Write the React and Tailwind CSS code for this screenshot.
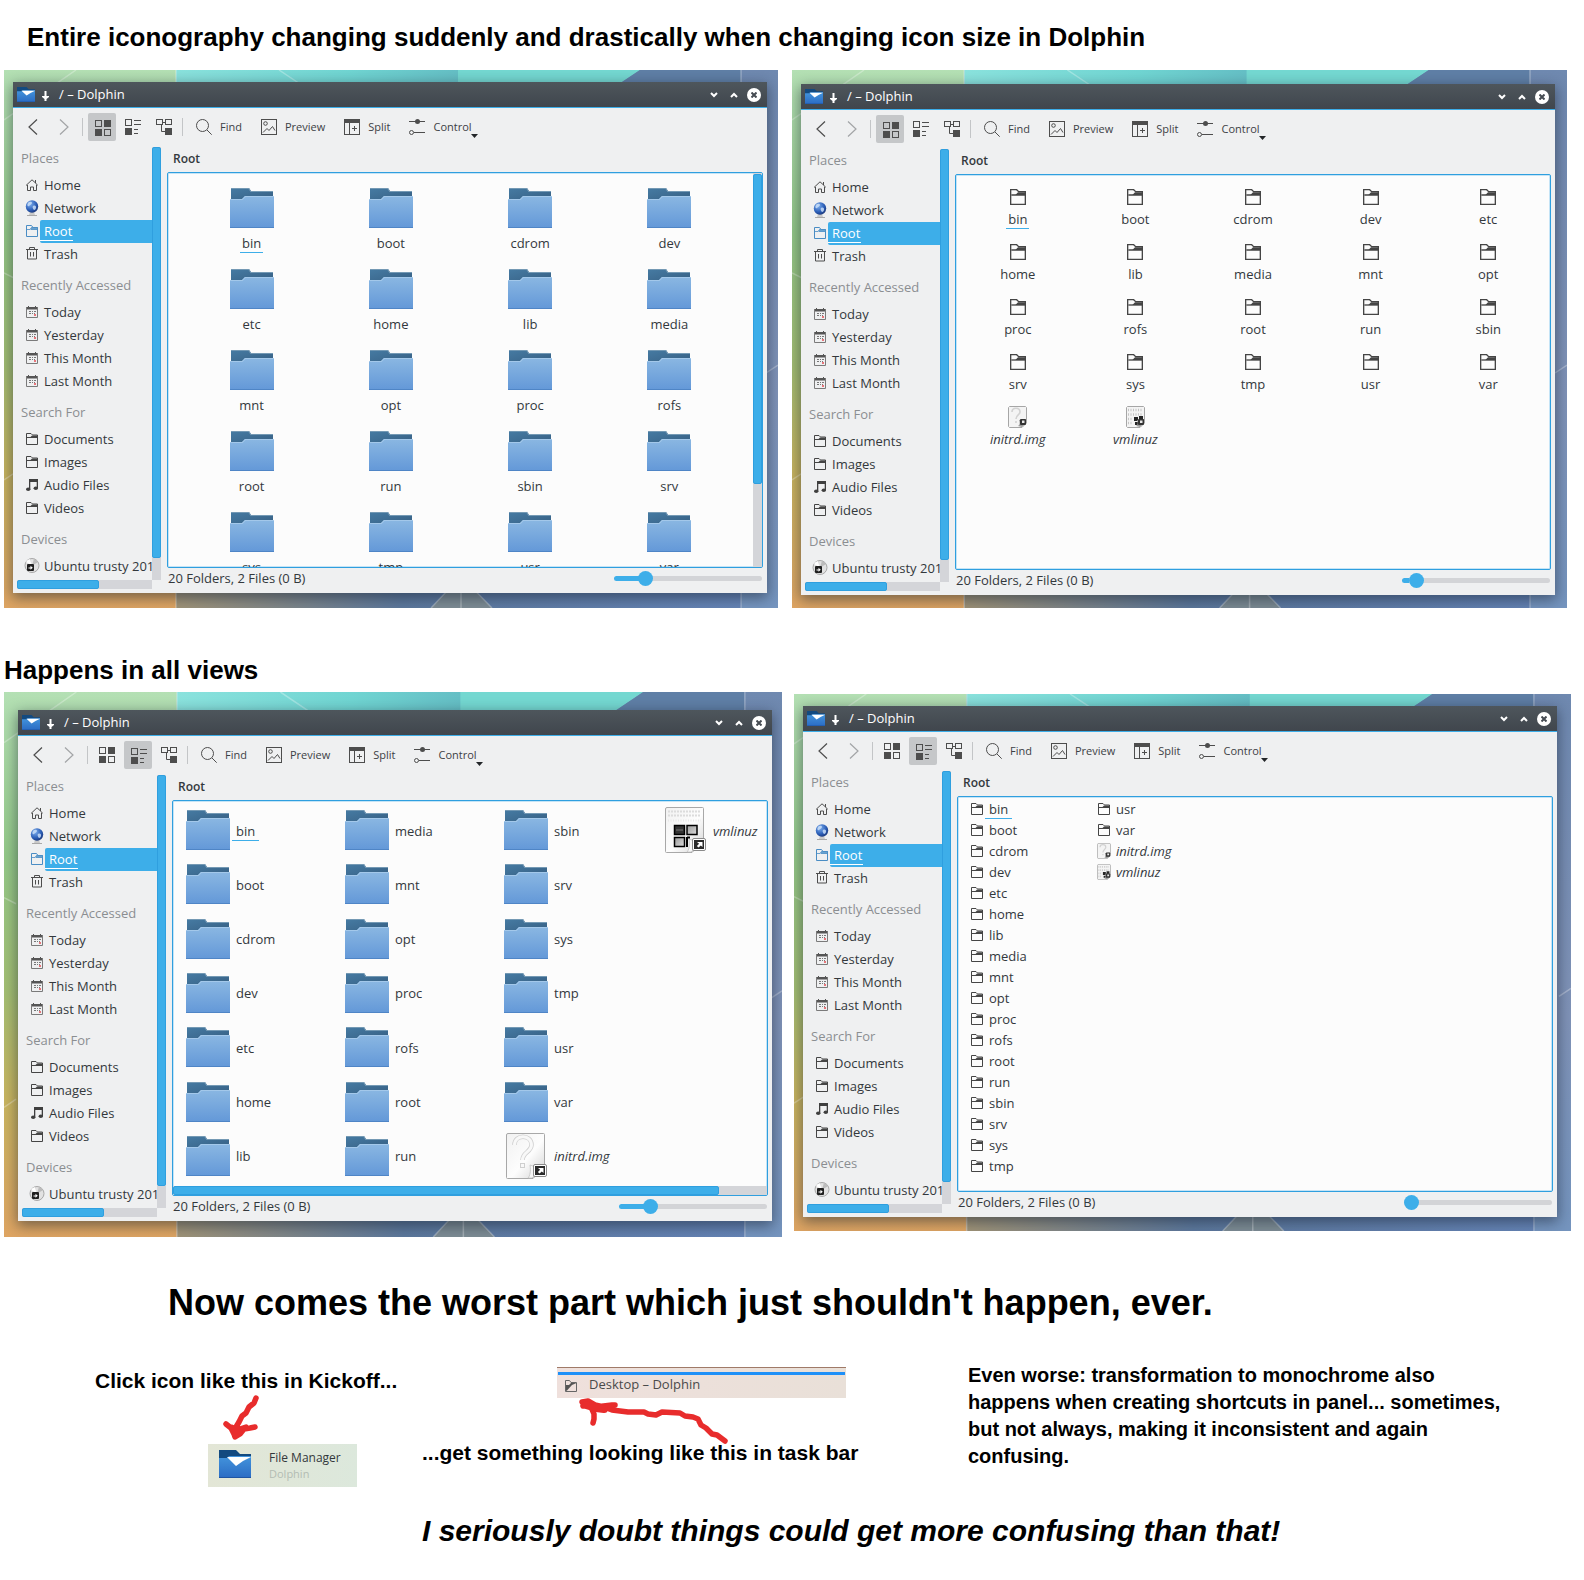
import React, { useState } from "react";

const UI = "font-['Open_Sans','Noto_Sans',sans-serif]";

/* ---------- icons ---------- */

function AppIcon({ className }) {
  return (
    <svg viewBox="0 0 32 28" preserveAspectRatio="none" className={className} aria-hidden="true">
      <defs>
        <linearGradient id="appBody" x1="0" y1="0" x2="0" y2="1">
          <stop offset="0" stopColor="#4394dc" />
          <stop offset="1" stopColor="#2b6cc4" />
        </linearGradient>
      </defs>
      <path d="M0 0h17l4 4h11v6H0z" fill="#134a80" />
      <path d="M0 8h8l2-2h22v22H0z" fill="url(#appBody)" />
      <path d="M0 27h32v1H0z" fill="#1f55a3" />
      <path d="M8 7h24l-8 4-7 5z" fill="#fff" />
    </svg>
  );
}

function BigFolder() {
  return (
    <svg width="44" height="40" viewBox="0 0 44 40" className="shrink-0" aria-hidden="true">
      <defs>
        <linearGradient id="folderFront" x1="0" y1="0" x2="0" y2="1">
          <stop offset="0" stopColor="#8ab7e2" />
          <stop offset="1" stopColor="#6398d8" />
        </linearGradient>
        <linearGradient id="folderBack" x1="0" y1="0" x2="1" y2="1">
          <stop offset="0" stopColor="#467ba3" />
          <stop offset="1" stopColor="#376084" />
        </linearGradient>
      </defs>
      <path d="M1 0h18l2 3h22v9H1z" fill="url(#folderBack)" />
      <path d="M1 0h18l2 3h22v1H20.500l-2-3H1z" fill="#7499b4" />
      <path d="M0 11h12l3-3h29v32H0z" fill="url(#folderFront)" />
      <path d="M0 11h12l3-3h29v1H15.500l-3 3H0z" fill="#a3c8ea" />
      <path d="M0 39h44v1H0z" fill="#4f85c6" />
    </svg>
  );
}

function MonoFolder({ size = 12, color = "#454545" }) {
  return (
    <svg width={size} height={size} viewBox="0 0 12 12" className="shrink-0" fill="none" aria-hidden="true">
      <path d="M.5 11.500V.5H5l1.500 1.500h5v9.500z" stroke={color} />
      <path d="M1 4.500h3L6 2.500h5.500v2z" fill={color} />
      <path d="M1 4.500h10.500" stroke={color} />
    </svg>
  );
}

function OutlineFolder() {
  return (
    <svg width="12" height="12" viewBox="0 0 12 12" fill="none" className="shrink-0" aria-hidden="true">
      <path d="M.5 11.500V.5h5L7 2.500h4.500v9z" stroke="#4a8dc4" />
      <path d="M1 4.500h3l1.500-2h6v2H5" fill="#6aa3d0" stroke="#4a8dc4" strokeWidth=".8" />
    </svg>
  );
}

function HomeIcon() {
  return (
    <svg width="12" height="12" viewBox="0 0 12 12" fill="none" stroke="#4d4d4d" className="shrink-0" aria-hidden="true">
      <path d="M0 6.500L6 .8l3 2.700M9.500 1v3l2.300 2.500M1.500 6v5.500h3V8h3v3.500h3V6" />
    </svg>
  );
}

function GlobeIcon() {
  return (
    <svg width="14" height="16" viewBox="0 0 14 16" className="-ml-px shrink-0" aria-hidden="true">
      <defs>
        <radialGradient id="globe" cx=".35" cy=".3" r=".8">
          <stop offset="0" stopColor="#7fb0ee" />
          <stop offset=".6" stopColor="#2c5fb8" />
          <stop offset="1" stopColor="#17306f" />
        </radialGradient>
      </defs>
      <path d="M2 15.500h10" stroke="#a9a9a9" />
      <path d="M5 12h4l1 3H4z" fill="#c9c9c9" />
      <circle cx="7" cy="6.500" r="6.200" fill="url(#globe)" />
      <path d="M3 3c2-2 4-1 4 0S5 5 4 6 1.500 5 3 3zM8 6c2-1 3.500 0 3 2s-2 2.500-2.500 1.500S7 7 8 6z" fill="#c9def8" opacity=".85" />
    </svg>
  );
}

function TrashIcon() {
  return (
    <svg width="12" height="13" viewBox="0 0 12 13" fill="none" stroke="#4d4d4d" className="shrink-0" aria-hidden="true">
      <path d="M0 2.500h12M3.500 2V.5h5V2M1.500 2.500v9.500h9V2.500M4.500 5v4.500M7.500 5v4.500" />
    </svg>
  );
}

function CalendarIcon() {
  return (
    <svg width="12" height="12" viewBox="0 0 12 12" fill="none" className="shrink-0" aria-hidden="true">
      <path d="M.5 1v10.500h11V1" stroke="#7a7a7a" />
      <path d="M1 1h10v2.500H1z" fill="#555" />
      <path d="M2.500 0v2M9.500 0v2" stroke="#555" />
      <path d="M3 5.500h2M6 5.500h1M8 5.500h2M3 7.500h2M6 7.500h1M8 7.500h1" stroke="#777" />
      <path d="M8 8h2v2H8z" fill="#e8757a" />
    </svg>
  );
}

function MusicIcon() {
  return (
    <svg width="12" height="12" viewBox="0 0 12 12" className="shrink-0" fill="#3f3f3f" aria-hidden="true">
      <path d="M3 0h9v3H3z" />
      <path d="M3 0h1.300v10H3zM10.700 0H12v9h-1.300z" />
      <ellipse cx="2.200" cy="10.200" rx="2.200" ry="1.700" />
      <ellipse cx="9.800" cy="9.200" rx="2.200" ry="1.700" />
    </svg>
  );
}

function DiscIcon() {
  return (
    <svg width="16" height="16" viewBox="0 0 16 16" className="-ml-0.5 shrink-0" aria-hidden="true">
      <circle cx="8" cy="7.500" r="7" fill="#e2e2e2" stroke="#a8a8a8" />
      <path d="M8 7.500L10 .8a7 7 0 014 3.500z" fill="#bcbcbc" />
      <path d="M8 7.500L2 4A7 7 0 015.500 1z" fill="#fff" />
      <rect x="3" y="6" width="7" height="7" rx="1" fill="#1f1f1f" />
      <path d="M4.500 9.500h2V7.800l2.300 2-2.300 2V10.500h-2z" fill="#fff" />
    </svg>
  );
}

function FileIcon({ kind, width, height }) {
  return (
    <svg width={width} height={height} viewBox="0 0 41 46" className="shrink-0" aria-hidden="true">
      <defs>
        <linearGradient id="paper" x1="0" y1="0" x2="1" y2="1">
          <stop offset="0" stopColor="#f1f1f1" />
          <stop offset=".55" stopColor="#fdfdfd" />
          <stop offset="1" stopColor="#d2d2d2" />
        </linearGradient>
        <linearGradient id="tile" x1="0" y1="0" x2="1" y2="1">
          <stop offset="0" stopColor="#9b9b9b" />
          <stop offset="1" stopColor="#dcdcdc" />
        </linearGradient>
      </defs>
      <path d="M2 .5h35.500a1 1 0 011 1V34L27 45.500H1.500a1 1 0 01-1-1V2A1.500 1.500 0 012 .5z" fill="url(#paper)" stroke="#a8a8a8" />
      <path d="M22 45c2-2 3-7 2-13 4 2 9 2 14 1L26 45z" fill="#f7f7f7" stroke="#bdbdbd" strokeWidth=".7" />
      {kind === "unknown" ? (
        <g fill="none" stroke="#cfcfcf">
          <path d="M8.500 12c0-11 17-11 17 0 0 7-9 7-9 15" strokeWidth="4.500" />
          <path d="M8.500 12c0-11 17-11 17 0 0 7-9 7-9 15" stroke="#f8f8f8" strokeWidth="3" />
          <rect x="14.500" y="30.500" width="4" height="4" fill="#f8f8f8" />
        </g>
      ) : (
        <g>
          <path d="M3 4.500h33M3 8.500h33" stroke="#dcdcdc" strokeWidth="2" strokeDasharray="2 1" />
          <path d="M3 13.500h33" stroke="#e8e8e8" strokeWidth="2" strokeDasharray="1 1.500" />
          <rect x="9.500" y="18.500" width="10" height="9" fill="#333" stroke="#000" strokeWidth="1.500" />
          <path d="M11 23h7" stroke="#777" />
          <rect x="22" y="18.500" width="10" height="9" fill="url(#tile)" stroke="#000" strokeWidth="1.500" />
          <rect x="9.500" y="30.500" width="10" height="9" fill="url(#tile)" stroke="#000" strokeWidth="1.500" />
          <path d="M22 30v10M22 30.500h3" stroke="#000" strokeWidth="2" />
        </g>
      )}
      <rect x="27.500" y="31.500" width="13" height="12" rx="1.500" fill="#fff" stroke="#8a8a8a" />
      <rect x="29" y="33" width="10" height="9" fill="#2a2a2a" />
      <path d="M32 35h5.500v5l-1.700-1.600-2.300 2.200-1.600-1.500 2.200-2.300z" fill="#fff" />
    </svg>
  );
}

function SmallFileIcon({ kind, width, height }) {
  return (
    <svg width={width} height={height} viewBox="0 0 19 22" className="shrink-0" aria-hidden="true">
      <path d="M1.500 .5h16l1 1V17l-4.500 4.500H1.500l-1-1v-19z" fill="#f4f4f4" stroke="#a6a6a6" />
      {kind === "unknown" ? (
        <path d="M4 6c0-5 8-5 8 0 0 3-4 3-4 7M8 15v2" fill="none" stroke="#d2d2d2" strokeWidth="1.600" />
      ) : (
        <g>
          <path d="M2 4h15M2 8.500h15M2 13h5M2 17h5" stroke="#c4c4c4" strokeWidth="2.500" strokeDasharray="1 1.500" />
          <path d="M8 11h4v4H8zM13 10h4v4h-4zM9 16h3v3H9z" fill="#262626" />
        </g>
      )}
      <path d="M10 20c2-1 2-4 1-6l7-1v4l-4 4z" fill="#9a9a9a" />
      <rect x="12" y="13" width="6" height="6" rx="1" fill="#333" />
      <path d="M14 14.500h2.500V17h-2.500z" fill="#e8e8e8" />
    </svg>
  );
}

const T = "#4d4d4d";

const GridGlyph = () => (
  <svg width="16" height="16" viewBox="0 0 16 16" fill="none" stroke={T} aria-hidden="true">
    <rect x=".5" y=".5" width="6" height="6" />
    <rect x="9" y="0" width="7" height="7" fill={T} stroke="none" />
    <rect x="0" y="9" width="7" height="7" fill={T} stroke="none" />
    <rect x="9.500" y="9.500" width="6" height="6" />
  </svg>
);
const CompactGlyph = () => (
  <svg width="16" height="16" viewBox="0 0 16 16" fill="none" stroke={T} aria-hidden="true">
    <rect x=".5" y=".5" width="6" height="6" />
    <rect x="0" y="9" width="7" height="7" fill={T} stroke="none" />
    <path d="M9 1.500h7M9 5.500h7M9 10.500h4M9 14.500h4" />
  </svg>
);
const TreeGlyph = () => (
  <svg width="16" height="16" viewBox="0 0 16 16" fill="none" stroke={T} aria-hidden="true">
    <rect x=".5" y=".5" width="6" height="5" />
    <rect x="9.500" y=".5" width="6" height="5" />
    <rect x="9" y="9" width="7" height="7" fill={T} stroke="none" />
    <path d="M7 3.500h2M5.500 6v6.500H9" />
  </svg>
);
const FindGlyph = () => (
  <svg width="16" height="16" viewBox="0 0 16 16" fill="none" stroke={T} aria-hidden="true">
    <circle cx="6.500" cy="6.500" r="6" />
    <path d="M11 11l4.700 4.700" />
  </svg>
);
const PreviewGlyph = () => (
  <svg width="16" height="16" viewBox="0 0 16 16" fill="none" stroke={T} aria-hidden="true">
    <rect x=".5" y=".5" width="15" height="15" />
    <circle cx="4.500" cy="4.500" r="1.800" />
    <path d="M2 13.500l4-4 2 2 3.500-4 2.500 4" />
  </svg>
);
const SplitGlyph = () => (
  <svg width="16" height="16" viewBox="0 0 16 16" fill="none" stroke={T} aria-hidden="true">
    <rect x=".5" y=".5" width="15" height="15" />
    <rect x="0" y="0" width="16" height="4" fill={T} stroke="none" />
    <path d="M5.500 4v12M10.500 7v5M8 9.500h5" />
  </svg>
);
const ControlGlyph = () => (
  <svg width="16" height="16" viewBox="0 0 16 16" fill="none" stroke={T} aria-hidden="true">
    <path d="M0 2.500h16M5 13.500h11" />
    <circle cx="8.500" cy="2.500" r="2.500" fill={T} stroke="none" />
    <circle cx="2.500" cy="13.500" r="2" />
  </svg>
);
const Chevron = ({ flip }) => (
  <svg width="16" height="16" viewBox="0 0 16 16" fill="none" stroke={flip ? "#a2a4a6" : T} aria-hidden="true">
    <path d={flip ? "M4 .5L12 8l-8 7.500" : "M12 .5L4 8l8 7.500"} strokeWidth="1.200" />
  </svg>
);

/* ---------- desktop wallpaper ---------- */

function Wallpaper({ id }) {
  return (
    <svg viewBox="0 0 774 538" preserveAspectRatio="none" className="absolute inset-0 h-full w-full" aria-hidden="true">
      <defs>
        <linearGradient id={id + "l"} x1="0" y1="0" x2="0" y2="1">
          <stop offset="0" stopColor="#b4e0b4" />
          <stop offset=".3" stopColor="#93c888" />
          <stop offset=".55" stopColor="#a3be72" />
          <stop offset=".75" stopColor="#c8b45f" />
          <stop offset="1" stopColor="#dfa563" />
        </linearGradient>
        <linearGradient id={id + "t"} x1="0" y1="0" x2="1" y2="0">
          <stop offset="0" stopColor="#8ae2dd" />
          <stop offset=".6" stopColor="#70d5d2" />
          <stop offset="1" stopColor="#64bdc4" />
        </linearGradient>
        <linearGradient id={id + "r"} x1="0" y1="0" x2="0" y2="1">
          <stop offset="0" stopColor="#6f89b0" />
          <stop offset=".6" stopColor="#8093b8" />
          <stop offset="1" stopColor="#7595bf" />
        </linearGradient>
        <linearGradient id={id + "b"} x1="0" y1="0" x2="1" y2="0">
          <stop offset="0" stopColor="#a09478" />
          <stop offset=".4" stopColor="#5c789c" />
          <stop offset="1" stopColor="#6584b6" />
        </linearGradient>
      </defs>
      <rect width="774" height="538" fill={"url(#" + id + "r)"} />
      <rect width="172" height="538" fill={"url(#" + id + "l)"} />
      <rect x="172" y="0" width="290" height="200" fill={"url(#" + id + "t)"} />
      <path d="M454 0h182l-60 40H454z" fill="#74d8d1" />
      <path d="M636 0h101v40H576z" fill="#5f7fa6" />
      <rect x="172" y="500" width="565" height="38" fill={"url(#" + id + "b)"} />
      <path d="M427 538l30-32 31 32z" fill="#7d8c94" />
      <g stroke="#fff" strokeOpacity=".3" fill="none">
        <path d="M0 50L72 0M172 0v20M275 0l30 20M737 0v538M774 295l-12 8M0 203l12 6M0 410l12-8M172 510v28M457 506v32M427 538l30-32 31 32" strokeWidth="1.500" />
      </g>
    </svg>
  );
}

/* ---------- window pieces ---------- */

function TitleBar() {
  return (
    <header className="flex h-[26px] items-center border-b border-[#3daee9] bg-linear-to-b from-[#4e565c] to-[#40464d] pl-1 pr-1.5 text-white">
      <AppIcon className="h-[15px] w-[18px]" />
      <svg width="7" height="10" viewBox="0 0 7 10" fill="#fff" className="ml-[7px] mt-0.5" aria-hidden="true">
        <path d="M2.500 0h2v5H7v1L4.500 8v2h-2V8L0 6V5h2.500z" />
      </svg>
      <h3 className="ml-2.5 grow pb-0.5 text-[13px] leading-[18px]">/ – Dolphin</h3>
      <div className="flex items-center gap-1.5">
        <button aria-label="Minimize" className="grid size-3.5 place-items-center">
          <svg width="8" height="6" viewBox="0 0 8 6" fill="none" stroke="#fff" strokeWidth="2" aria-hidden="true"><path d="M1 1l3 3 3-3" /></svg>
        </button>
        <button aria-label="Maximize" className="grid size-3.5 place-items-center">
          <svg width="8" height="6" viewBox="0 0 8 6" fill="none" stroke="#fff" strokeWidth="2" aria-hidden="true"><path d="M1 5l3-3 3 3" /></svg>
        </button>
        <button aria-label="Close" className="grid size-3.5 place-items-center rounded-full bg-white">
          <svg width="6" height="6" viewBox="0 0 6 6" stroke="#454b52" strokeWidth="2" aria-hidden="true"><path d="M.5 .5l5 5M5.500 .5l-5 5" /></svg>
        </button>
      </div>
    </header>
  );
}

function ModeButton({ label, active, children }) {
  return (
    <button
      aria-label={label}
      aria-pressed={active}
      className={"grid size-7 place-items-center rounded-[2px] " + (active ? "bg-[#c5c7c9] pl-0.5 pt-0.5" : "")}
    >
      {children}
    </button>
  );
}

const Separator = () => <span className="ml-px mr-0.5 h-[18px] w-px bg-[#c3c5c7]" />;

function ToolButton({ icon, children }) {
  return (
    <button className="flex h-7 items-center gap-2 px-[7px] text-[11px] leading-4 text-[#3d4145]">
      {icon}
      {children}
    </button>
  );
}

function Toolbar({ mode }) {
  return (
    <div role="toolbar" className="flex h-[39px] items-center gap-[3px] pb-0.5 pl-1.5">
      <button aria-label="Back" className="grid size-7 place-items-center"><Chevron /></button>
      <button aria-label="Forward" className="grid size-7 place-items-center"><Chevron flip /></button>
      <Separator />
      <ModeButton label="Icons" active={mode === "icons"}><GridGlyph /></ModeButton>
      <ModeButton label="Compact" active={mode === "compact"}><CompactGlyph /></ModeButton>
      <ModeButton label="Details"><TreeGlyph /></ModeButton>
      <Separator />
      <div className="flex items-center gap-[5px] pl-px">
        <ToolButton icon={<FindGlyph />}>Find</ToolButton>
        <ToolButton icon={<PreviewGlyph />}>Preview</ToolButton>
        <ToolButton icon={<SplitGlyph />}>Split</ToolButton>
        <ToolButton icon={<ControlGlyph />}>
          <span className="relative">
            Control
            <svg width="7" height="4" viewBox="0 0 7 4" className="absolute -right-1.5 bottom-[-3px]" aria-hidden="true">
              <path d="M0 0h7L3.500 4z" fill="#232629" />
            </svg>
          </span>
        </ToolButton>
      </div>
    </div>
  );
}

const GROUPS = [
  ["Places", [["Home", HomeIcon], ["Network", GlobeIcon], ["Root", OutlineFolder], ["Trash", TrashIcon]]],
  ["Recently Accessed", [["Today", CalendarIcon], ["Yesterday", CalendarIcon], ["This Month", CalendarIcon], ["Last Month", CalendarIcon]]],
  ["Search For", [["Documents", MonoFolder], ["Images", MonoFolder], ["Audio Files", MusicIcon], ["Videos", MonoFolder]]],
  ["Devices", [["Ubuntu trusty 2014", DiscIcon]]],
];

function PlaceRow({ name, Icon }) {
  const selected = name === "Root";
  return (
    <li>
      <a href={"#" + name.toLowerCase().replace(/ /g, "-")} className="flex h-[23px] items-center pl-[9px]">
        <span className="flex w-3.5 shrink-0 items-center pb-0.5"><Icon /></span>
        <span className={"flex h-full grow items-center whitespace-nowrap " + (selected ? "rounded-l-[2px] bg-[#3daee9] text-white" : "")}>
          <span className={"border-b pl-1 pr-px leading-[18px] " + (selected ? "border-white" : "border-transparent")}>{name}</span>
        </span>
      </a>
    </li>
  );
}

function Sidebar() {
  return (
    <nav aria-label="Places" className="flex w-[144px] shrink-0 flex-col">
      <div className="flex h-[433px]">
        <div className="min-w-0 grow overflow-hidden">
          {GROUPS.map(([title, items], i) => (
            <section key={title}>
              <h4 className={"pb-1 pl-1 leading-[23px] text-[#8b8e91] " + (i ? "pt-2" : "")}>{title}</h4>
              <ul>
                {items.map(([name, Icon]) => <PlaceRow key={name} name={name} Icon={Icon} />)}
              </ul>
            </section>
          ))}
        </div>
        <div className="w-[9px] shrink-0 bg-[#d4d5d9]">
          <div className="h-[95%] rounded-[2px] border border-[#2f9fdf] bg-[#3daee9]" />
        </div>
      </div>
      <div className="mr-[9px] h-[9px] bg-[#d4d5d9]">
        <div className="h-full w-[61%] rounded-[2px] border border-[#2f9fdf] bg-[#3daee9]" />
      </div>
    </nav>
  );
}

const FOLDERS = ["bin", "boot", "cdrom", "dev", "etc", "home", "lib", "media", "mnt", "opt", "proc", "rofs", "root", "run", "sbin", "srv", "sys", "tmp", "usr", "var"];
const ENTRIES = [
  ...FOLDERS.map((name) => ({ name, kind: "folder" })),
  { name: "initrd.img", kind: "unknown" },
  { name: "vmlinuz", kind: "binary" },
];

function Label({ entry, className }) {
  return (
    <span
      className={
        "border-b leading-[18px] " + className +
        (entry.name === "bin" ? " border-[#3daee9]" : " border-transparent") +
        (entry.kind === "folder" ? "" : " italic")
      }
    >
      {entry.name}
    </span>
  );
}

function LargeIconsView() {
  return (
    <div className="flex h-full">
      <ul className="grid grow auto-rows-[81px] grid-cols-4 px-3.5 pt-[15px]">
        {ENTRIES.slice(0, 20).map((e) => (
          <li key={e.name} className="flex flex-col items-center">
            <BigFolder />
            <Label entry={e} className="mt-1.5 px-0.5" />
          </li>
        ))}
      </ul>
      <div className="w-[9px] shrink-0 bg-[#d4d5d9] pt-px">
        <div className="h-[79%] rounded-[2px] border border-[#2f9fdf] bg-[#3daee9]" />
      </div>
    </div>
  );
}

function SmallIconsView() {
  return (
    <ul className="grid auto-rows-[55px] grid-cols-5 px-[3px] pt-[11px]">
      {ENTRIES.map((e) => (
        <li key={e.name} className="flex flex-col items-center">
          <span className="flex h-[22px] items-center">
            {e.kind === "folder" ? <MonoFolder size={16} /> : <SmallFileIcon kind={e.kind} width={19} height={22} />}
          </span>
          <Label entry={e} className="mt-0.5 px-0.5" />
        </li>
      ))}
    </ul>
  );
}

function LargeCompactView() {
  return (
    <div className="flex h-full flex-col">
      <ul className="grid min-h-0 grow auto-cols-[159px] grid-flow-col grid-rows-7 pb-[3px] pl-[13px] pt-0.5">
        {ENTRIES.map((e) => (
          <li key={e.name} className="flex items-center">
            <span className="flex w-11 shrink-0 justify-center">
              {e.kind === "folder" ? <BigFolder /> : <FileIcon kind={e.kind} width={41} height={46} />}
            </span>
            <Label entry={e} className="ml-0.5 mt-0.5 px-1" />
          </li>
        ))}
      </ul>
      <div className="h-[9px] shrink-0 bg-[#d4d5d9]">
        <div className="h-full w-[92%] rounded-[2px] border border-[#2f9fdf] bg-[#3daee9]" />
      </div>
    </div>
  );
}

function SmallCompactView() {
  return (
    <ul className="grid auto-cols-[127px] grid-flow-col grid-rows-[repeat(18,21px)] pl-[13px] pt-0.5">
      {ENTRIES.map((e) => (
        <li key={e.name} className="flex items-center">
          <span className="flex w-3 shrink-0 justify-center pb-0.5">
            {e.kind === "folder" ? <MonoFolder /> : <SmallFileIcon kind={e.kind} width={14} height={16} />}
          </span>
          <Label entry={e} className="ml-0.5 px-1" />
        </li>
      ))}
    </ul>
  );
}

function ZoomSlider({ start }) {
  const [value, setValue] = useState(start);
  return (
    <input
      type="range"
      aria-label="Icon size"
      min="0"
      max="100"
      value={value}
      onChange={(ev) => setValue(Number(ev.target.value))}
      style={{ backgroundImage: `linear-gradient(to right, #3daee9 ${value}%, #d3d4d7 ${value}%)` }}
      className="h-[5px] w-[148px] appearance-none rounded-full [&::-webkit-slider-thumb]:size-[15px] [&::-webkit-slider-thumb]:appearance-none [&::-webkit-slider-thumb]:rounded-full [&::-webkit-slider-thumb]:bg-[#3daee9]"
    />
  );
}

function DolphinWindow({ mode, zoom, children }) {
  return (
    <section className={"relative rounded-t-[2px] bg-[#eff0f1] text-[13px] text-[#33383c] shadow-[0_4px_14px_1px_rgba(20,30,45,0.5)] " + UI}>
      <TitleBar />
      <Toolbar mode={mode} />
      <div className="flex gap-1.5 pb-1 pl-1 pr-1">
        <Sidebar />
        <div className="flex min-w-0 grow flex-col">
          <h4 className="pl-1.5 text-[12px] font-semibold leading-[23px]">Root</h4>
          <div className="mt-0.5 h-[396px] overflow-hidden rounded-[2px] border border-[#2f9fdf] bg-[#fcfcfc] shadow-[inset_0_0_0_1px_#c5e4f6]">
            {children}
          </div>
          <footer className="flex items-center justify-between pr-px leading-[21px]">
            <span className="pl-px">20 Folders, 2 Files (0 B)</span>
            <ZoomSlider start={zoom} />
          </footer>
        </div>
      </div>
    </section>
  );
}

function Shot({ id, className, children }) {
  return (
    <div className={"relative min-w-0 overflow-hidden " + className}>
      <Wallpaper id={id} />
      {children}
    </div>
  );
}

/* ---------- hand-drawn arrows ---------- */

const ArrowDown = () => (
  <svg width="38" height="50" viewBox="0 0 38 50" fill="none" stroke="#e82c2c" strokeWidth="5.500" strokeLinecap="round" strokeLinejoin="round" aria-hidden="true">
    <path d="M33 4l-2 5-5 4-3 6-4 3-3 6-3 5-1 8M3 30l5 4 3 6 1 3 5-3 4-5 6-1 5-1M8 33l6 3 9-3" />
  </svg>
);

const ArrowLeft = () => (
  <svg width="150" height="48" viewBox="0 0 150 48" fill="none" stroke="#e82c2c" strokeWidth="5.500" strokeLinecap="round" strokeLinejoin="round" aria-hidden="true">
    <path d="M146 43l-8-6-5-1-6-6-5-3-3-6-5-2-8-1-5-3-18-1-6 3-8-1-4-2-16 0-8-1-8-1-8-3-9-2-7-4-6 1M4 8l6-3 6 4 17-2 3-0M12 9l3 7 0 5-1 4" />
    <path d="M7 7l10 3 8 1" strokeWidth="8" />
  </svg>
);

/* ---------- page ---------- */

export default function App() {
  return (
    <main className="min-h-screen bg-white pb-6 font-['Liberation_Sans',Arial,sans-serif] font-bold text-black">
      <h1 className="pl-[27px] pt-5 text-[26px] leading-[34px]">
        Entire iconography changing suddenly and drastically when changing icon size in Dolphin
      </h1>

      <div className="mt-4 flex items-start gap-3.5 pl-1 pr-[17px] font-normal">
        <Shot id="a" className="flex-1 pb-[15px] pl-[9px] pr-[11px] pt-3">
          <DolphinWindow mode="icons" zoom={18}><LargeIconsView /></DolphinWindow>
        </Shot>
        <Shot id="b" className="flex-1 pb-[13px] pl-[9px] pr-3 pt-3.5">
          <DolphinWindow mode="icons" zoom={5}><SmallIconsView /></DolphinWindow>
        </Shot>
      </div>

      <h2 className="pl-1 pt-[45px] text-[26px] leading-[34px]">Happens in all views</h2>

      <div className="mt-[5px] flex items-start gap-3 pl-1 pr-[13px] font-normal">
        <Shot id="c" className="flex-1 pb-4 pl-3.5 pr-2.5 pt-[18px]">
          <DolphinWindow mode="compact" zoom={18}><LargeCompactView /></DolphinWindow>
        </Shot>
        <Shot id="d" className="mt-0.5 flex-1 pb-3.5 pl-[9px] pr-3.5 pt-3">
          <DolphinWindow mode="compact" zoom={0}><SmallCompactView /></DolphinWindow>
        </Shot>
      </div>

      <h2 className="pl-[168px] pt-11 text-[36px] leading-[44px]">
        Now comes the worst part which just shouldn't happen, ever.
      </h2>

      <div className="mt-[37px] flex items-start">
        <div className="w-[422px] shrink-0 pl-[95px] pt-[5px]">
          <p className="text-[21px] leading-[27px]">Click icon like this in Kickoff...</p>
          <div className="pl-32"><ArrowDown /></div>
          <div className={"ml-[113px] flex h-[43px] w-[149px] items-center gap-[18px] bg-linear-to-r from-[#e3e6d6] to-[#dce8dc] pl-[11px] font-normal " + UI}>
            <AppIcon className="mb-1 h-7 w-8" />
            <div>
              <p className="text-[12px] leading-4 text-[#33383c]">File Manager</p>
              <p className="text-[11px] leading-4 text-[#b3bcb3]">Dolphin</p>
            </div>
          </div>
        </div>
        <div className="w-[546px] shrink-0 pt-[5px]">
          <div className={"ml-[135px] h-[31px] w-[289px] border-t border-[#a07a68] bg-linear-to-r from-[#efe0dc] to-[#e9e0d8] px-px pt-1 font-normal " + UI}>
            <div className="h-[3px] bg-[#1e90f8]" />
            <div className="flex items-center gap-3 pl-[7px]">
              <svg width="12" height="12" viewBox="0 0 12 12" fill="none" stroke="#666" className="mt-0.5" aria-hidden="true">
                <path d="M.5 11.500V.5h4l1.500 2h5.500v9z" />
                <path d="M1 5h3l2-2h5.500L7 5l-5 5.500-1 .5z" fill="#555" stroke="none" />
              </svg>
              <span className="text-[13px] leading-[19px] text-[#4a4a4a]">Desktop – Dolphin</span>
            </div>
          </div>
          <div className="h-[45px] pl-[157px]"><ArrowLeft /></div>
          <p className="text-[21px] leading-[20px]">...get something looking like this in task bar</p>
        </div>
        <p className="max-w-[545px] text-[20px] leading-[27px]">
          Even worse: transformation to monochrome also happens when creating shortcuts in panel... sometimes, but not always, making it inconsistent and again confusing.
        </p>
      </div>

      <p className="pl-[422px] pt-6 text-[30px] italic leading-10">I seriously doubt things could get more confusing than that!</p>
    </main>
  );
}
